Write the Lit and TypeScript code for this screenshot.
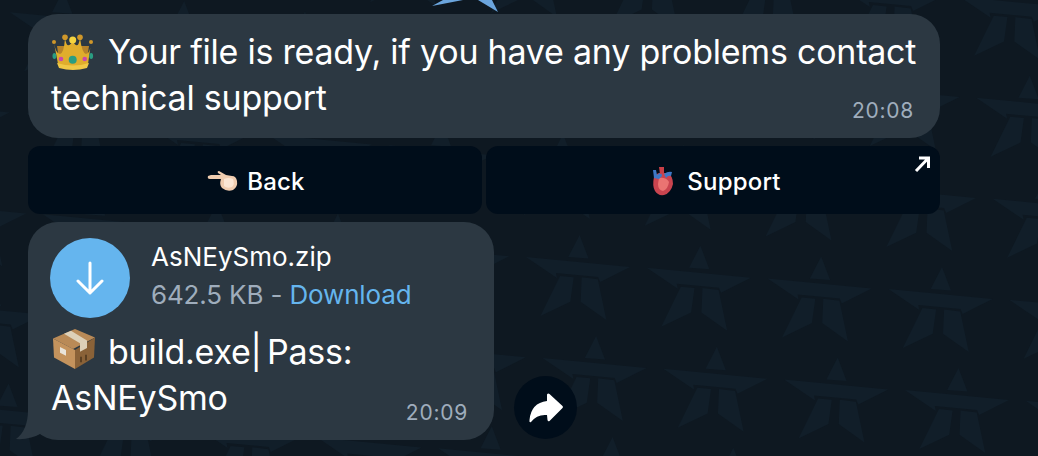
import { LitElement, html, css, svg } from "lit";
import { customElement } from "lit/decorators.js";

const AX = 120.8, AY = 10.7, BX = 16.5, BY = 101, OX = 579.6, OY = 235;

const star = (x: number, y: number) => svg`
  <g transform="translate(${x} ${y}) scale(1.03 1)" fill="#111e29">
    <path d="M0 0-11 22 8.7 23.5Z"/>
    <path d="M-52 22 49 32 20 47 18 42-23 38-22 43Z"/>
    <path d="M-19 41-5.7 42.3-9 66.7-38 81Z"/>
    <path d="M2 42.3 17.7 44.3 26 85 1 66.7Z"/>
  </g>`;

const stars = () => {
  const out: unknown[] = [];
  for (let i = -7; i <= 5; i++) {
    for (let j = -4; j <= 3; j++) {
      const x = OX + i * AX + j * BX;
      const y = OY + i * AY + j * BY;
      if (x > -80 && x < 1120 && y > -100 && y < 470) out.push(star(x, y));
    }
  }
  return out;
};

@customElement("app-root")
export class AppRoot extends LitElement {
  static styles = css`
    :host {
      display: block;
      width: 1038px;
      height: 456px;
      overflow: hidden;
      position: relative;
      background: #0e1821;
      font-family: Inter, "Liberation Sans", sans-serif;
      color: #fff;
    }
    .pattern { position: absolute; inset: 0; width: 1038px; height: 456px; }
    .chat {
      position: relative;
      display: flex;
      flex-direction: column;
      gap: 8px;
      padding: 14px 0 0 28px;
      width: 912px;
    }
    .bubble {
      background: #2c3842;
      border-radius: 30px;
      position: relative;
    }
    .first { height: 124px; box-sizing: border-box; padding: 15px 10px 0 23px; }
    .msg {
      font-size: 34px;
      line-height: 46px;
      letter-spacing: -0.23px;
      margin: 0;
    }
    .line { display: block; width: fit-content; white-space: nowrap; }
    .emoji {
      display: inline-block;
      vertical-align: -6px;
      margin-right: 13px;
    }
    .time {
      position: absolute;
      color: #9fadbc;
      font-size: 21px;
      line-height: 26px;
      letter-spacing: 0.75px;
    }
    .first .time { right: 26px; bottom: 14px; }
    .buttons { display: flex; gap: 4px; }
    .btn {
      flex: 1;
      height: 68px;
      box-sizing: border-box;
      padding-top: 2px;
      background: #000d1a;
      border-radius: 12px;
      display: flex;
      align-items: center;
      justify-content: center;
      gap: 9px;
      font-size: 24px;
      font-weight: 500;
      letter-spacing: 0.2px;
      position: relative;
    }
    .corner { position: absolute; top: 9px; right: 8px; }
    .row { display: flex; align-items: flex-end; gap: 20px; }
    .second { width: 466px; height: 218px; box-sizing: border-box; padding: 16px 22px 0 23px; }
    .second .time { right: 26px; bottom: 14px; }
    .tail { position: absolute; left: -14px; bottom: 0; }
    .file { display: flex; gap: 21px; height: 80px; position: relative; }
    .circle {
      width: 80px;
      height: 80px;
      margin-left: -1px;
      border-radius: 50%;
      background: #65b5ee;
      display: flex;
      align-items: center;
      justify-content: center;
    }
    .meta { display: flex; flex-direction: column; gap: 6px; padding-top: 3px; }
    .name { font-size: 26px; line-height: 32px; font-weight: 400; letter-spacing: 0; }
    .size { font-size: 26px; line-height: 32px; color: #9fadbc; letter-spacing: -0.15px; }
    .link { color: #65b5ee; }
    .second .msg { margin-top: 10px; position: relative; word-spacing: -4px; }
    .forward {
      width: 63px;
      height: 63px;
      margin-bottom: 1px;
      border-radius: 50%;
      background: #000d1a;
      display: flex;
      align-items: center;
      justify-content: center;
    }
  `;

  render() {
    return html`
      <svg class="pattern" viewBox="0 0 1038 456">
        ${stars()}
        <path fill="#6ba5dd" d="M432 6 443 0H463ZM478 0 498 12 492 0Z"/>
      </svg>
      <div class="chat">
        <div class="bubble first">
          <p class="msg"><span class="line"><svg class="emoji" width="44" height="36" viewBox="0 0 44 36">
              <path fill="#b5822a" d="M6 12H38L36 26H8Z"/>
              <path fill="#e0ad2c" d="M3 9Q5 20 9 20 13 19 14 4 16 17 21.7 7 27 17 29 4 31 19 35 20 39 20 40 9L37 30Q22 36 7 30Z"/>
              <path fill="#f0c846" d="M6 29Q22 34 38 29L36 34Q22 38 8 34Z"/>
              <circle cx="21.7" cy="6" r="3.5" fill="#f4d33f"/>
              <circle cx="14" cy="3.2" r="2.8" fill="#cf972a"/><circle cx="29" cy="3.2" r="2.8" fill="#cf972a"/>
              <circle cx="3" cy="8" r="2" fill="#cf972a"/><circle cx="40" cy="8" r="2" fill="#cf972a"/>
              <circle cx="21.7" cy="25.7" r="4" fill="#2a9d82"/>
              <circle cx="10" cy="25" r="2.3" fill="#c948a8"/><circle cx="33.7" cy="25" r="2.3" fill="#c948a8"/>
              <ellipse cx="3.4" cy="22" rx="1.9" ry="3" fill="#2a9d82"/><ellipse cx="40.2" cy="22" rx="1.9" ry="3" fill="#2a9d82"/>
            </svg>Your file is ready, if you have any problems contact</span><span class="line">technical support</span></p>
          <span class="time">20:08</span>
        </div>
        <div class="buttons">
          <div class="btn"><svg width="33" height="22" viewBox="-2 0 33 22">
              <path fill="#f0cdb0" d="M1 6Q0 9 3 9L14 9Q12 15 15 18Q20 22 26 20Q31 17 30 11Q29 6 25 6L19 5 12 1Q10 1 11 3L14 5 4 5Z"/>
              <path fill="#fbe6d4" d="M17 9Q22 7 26 9Q28 14 25 17Q20 19 17 16Z"/>
            </svg><span>Back</span></div>
          <div class="btn"><svg width="33" height="30" viewBox="-6 0 33 30">
              <path fill="#c9444f" d="M3 11Q7 6 11 7L17 7Q22 10 22 18Q20 27 13 29Q7 30 4 25Q1 20 3 11Z"/>
              <path fill="#ea7472" d="M8 12Q15 11 18 16Q17 23 12 25Q7 24 7 18Z"/>
              <path fill="#3f78c6" d="M2 4 5 4 6 9 10 6 11 10 8 13 3 12ZM13 8Q17 5 21 6L20 10Q17 9 15 12Z"/>
              <path fill="#c93f47" d="M8 1 13 1 13 7 9 8Z"/>
            </svg><span>Support</span>
            <svg class="corner" width="18" height="18" viewBox="0 0 18 18" fill="none" stroke="#fff" stroke-width="3">
              <path d="M5 3H14.5V13M14 3.5 2 16"/>
            </svg>
          </div>
        </div>
        <div class="row">
          <div class="bubble second">
            <svg class="tail" width="30" height="40" viewBox="0 0 30 40"><path fill="#2c3842" d="M14 10Q14 30 2 39 16 40 28 33V10Z"/></svg>
            <div class="file">
              <div class="circle"><svg width="28" height="34" viewBox="0 0 28 34" fill="none" stroke="#fff" stroke-width="3" stroke-linecap="round" stroke-linejoin="round">
                  <path d="M14 2V32M2 20 14 32 26 20"/>
                </svg></div>
              <div class="meta">
                <span class="name">AsNEySmo.zip</span>
                <span class="size">642.5 KB - <span class="link">Download</span></span>
              </div>
            </div>
            <p class="msg"><span class="line"><svg class="emoji" width="44" height="42" viewBox="0 0 44 44" preserveAspectRatio="none">
                <path fill="#b98a57" d="M2 11 24 1 44 10 22 22Z"/>
                <path fill="#c4935d" d="M2 11 24 23 24 43 3 31Z"/>
                <path fill="#8a6238" d="M24 23 44 10 43 31 24 43Z"/>
                <path fill="#ddd0b8" d="M13 6 20 3 36 13 36 21 29 25 29 16Z"/>
                <path fill="#e9e4da" d="M9 20 15 23 15 29 9 26Z"/>
                <path fill="#5a3f22" d="M29 30h2v6h-2zM34 28h2v6h-2z"/>
              </svg>build.exe| Pass:</span><span class="line">AsNEySmo</span></p>
            <span class="time">20:09</span>
          </div>
          <div class="forward"><svg width="36" height="30" viewBox="0 0 36 30">
              <path fill="#fff" d="M19 1.5Q20 0 21.5 1L34.5 13Q35.5 14 34.5 15L21.5 28Q20 29 19.5 27L19 22Q9 21 3 29Q1 30 1.5 27Q3 10 19 8Z"/>
            </svg></div>
        </div>
      </div>
    `;
  }
}
